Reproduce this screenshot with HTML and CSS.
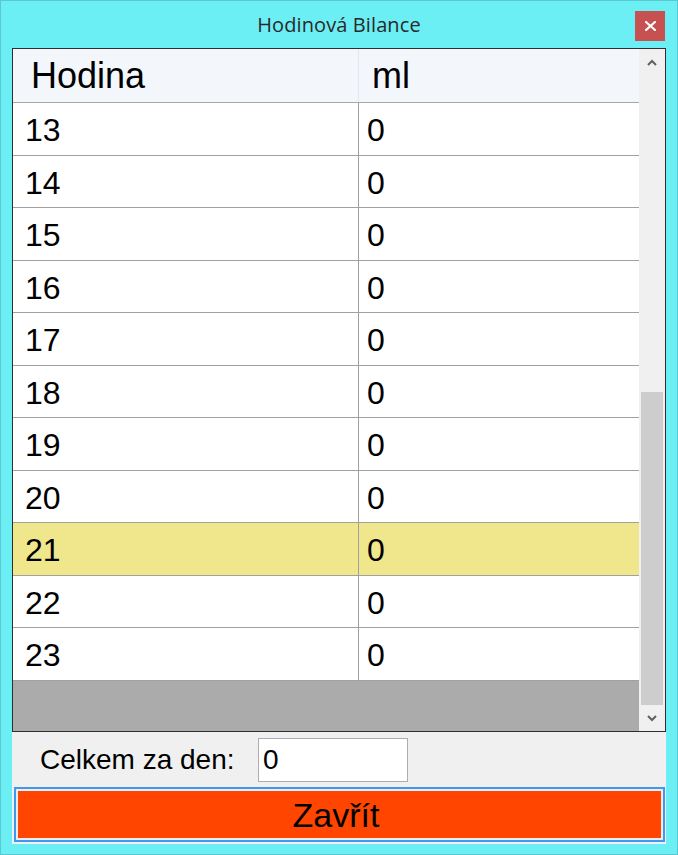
FILE: index.html
```html
<!DOCTYPE html>
<html lang="cs">
<head>
<meta charset="utf-8">
<title>Hodinová Bilance</title>
<link rel="stylesheet" href="styles.css">
</head>
<body>
<div class="window">
  <div class="titlebar">
    <span class="title">Hodinová Bilance</span>
    <div class="close" aria-label="Zavřít okno">
      <svg width="11" height="10" viewBox="0 0 11 10"><path d="M1 1 L10 9 M10 1 L1 9" stroke="#fff" stroke-width="2.2" stroke-linecap="square" fill="none"/></svg>
    </div>
  </div>
  <div class="client">
    <div class="grid">
      <div class="grid-body">
        <div class="row head">
          <div class="cell c1">Hodina</div>
          <div class="cell c2">ml</div>
        </div>
        <div class="row"><div class="cell c1">13</div><div class="cell c2">0</div></div>
        <div class="row"><div class="cell c1">14</div><div class="cell c2">0</div></div>
        <div class="row"><div class="cell c1">15</div><div class="cell c2">0</div></div>
        <div class="row"><div class="cell c1">16</div><div class="cell c2">0</div></div>
        <div class="row"><div class="cell c1">17</div><div class="cell c2">0</div></div>
        <div class="row"><div class="cell c1">18</div><div class="cell c2">0</div></div>
        <div class="row"><div class="cell c1">19</div><div class="cell c2">0</div></div>
        <div class="row"><div class="cell c1">20</div><div class="cell c2">0</div></div>
        <div class="row current"><div class="cell c1">21</div><div class="cell c2">0</div></div>
        <div class="row"><div class="cell c1">22</div><div class="cell c2">0</div></div>
        <div class="row"><div class="cell c1">23</div><div class="cell c2">0</div></div>
        <div class="empty"></div>
      </div>
      <div class="scrollbar">
        <div class="sb-btn">
          <svg width="10" height="7" viewBox="0 0 10 7"><path d="M1 6 L5 2 L9 6" stroke="#606060" stroke-width="2" fill="none"/></svg>
        </div>
        <div class="sb-track"><div class="sb-thumb"></div></div>
        <div class="sb-btn">
          <svg width="10" height="7" viewBox="0 0 10 7"><path d="M1 1 L5 5 L9 1" stroke="#606060" stroke-width="2" fill="none"/></svg>
        </div>
      </div>
    </div>
    <div class="total">
      <span class="label">Celkem za den:</span>
      <div class="textbox">0</div>
    </div>
    <div class="btn-row">
      <div class="btn"><span class="btn-face">Zavřít</span></div>
    </div>
  </div>
</div>
</body>
</html>
```
FILE: styles.css
```css
html, body {
  margin: 0;
  padding: 0;
}
body {
  width: 678px;
  height: 855px;
  overflow: hidden;
  background: #6beef4;
}
.window {
  box-sizing: border-box;
  width: 678px;
  height: 855px;
  border: 1px solid #58c9d0;
  background: #6beef4;
  display: flex;
  flex-direction: column;
}
.titlebar {
  height: 47px;
  flex: none;
  display: grid;
  grid-template-columns: 1fr auto 1fr;
  align-items: center;
}
.title {
  grid-column: 2;
  font-family: "Open Sans", "Noto Sans", sans-serif;
  font-size: 20px;
  color: #2a2a2a;
  line-height: 1;
  letter-spacing: 0.1px;
}
.close {
  grid-column: 3;
  justify-self: end;
  align-self: start;
  margin-top: 10px;
  margin-right: 12px;
  width: 30px;
  height: 30px;
  background: #c75050;
  display: flex;
  align-items: center;
  justify-content: center;
}
.client {
  margin: 0 11px;
  height: 796px;
  flex: none;
  background: #f0f0f0;
  display: flex;
  flex-direction: column;
}
.grid {
  box-sizing: border-box;
  height: 684px;
  flex: none;
  border: 1px solid #2e2e2e;
  display: flex;
  background: #ffffff;
}
.grid-body {
  flex: 1;
  display: flex;
  flex-direction: column;
  font-family: "Liberation Sans", Arial, sans-serif;
  color: #000;
}
.row {
  box-sizing: border-box;
  height: 52.5px;
  flex: none;
  display: grid;
  grid-template-columns: 346px 1fr;
  border-bottom: 1px solid #a0a0a0;
  background: #fff;
  font-size: 32px;
}
.row.head {
  height: 54px;
  background: #f3f6fb;
  font-size: 36px;
  border-bottom-color: #a8a8a8;
}
.row.current {
  background: #f0e68c;
}
.cell {
  display: flex;
  align-items: center;
  padding-left: 12px;
  padding-top: 3px;
  line-height: 1;
}
.c1 {
  border-right: 1px solid #a0a0a0;
}
.c2 {
  padding-left: 8px;
}
.head .cell {
  padding-top: 0;
}
.head .c1 {
  padding-left: 18px;
  border-right-color: #e2e7ee;
}
.head .c2 {
  padding-left: 13px;
}
.empty {
  flex: 1;
  background: #ababab;
}
.scrollbar {
  width: 26px;
  flex: none;
  display: flex;
  flex-direction: column;
  background: #f0f0f0;
}
.sb-btn {
  height: 26px;
  flex: none;
  display: flex;
  align-items: center;
  justify-content: center;
}
.sb-track {
  flex: 1;
  display: flex;
  flex-direction: column;
  justify-content: flex-end;
}
.sb-thumb {
  height: 313px;
  margin: 0 2px;
  background: #cdcdcd;
}
.total {
  height: 55px;
  flex: none;
  display: grid;
  grid-template-columns: 218px 150px;
  align-items: center;
  padding-left: 28px;
  font-family: "Liberation Sans", Arial, sans-serif;
  font-size: 28px;
  color: #000;
}
.label {
  line-height: 1;
}
.textbox {
  box-sizing: border-box;
  height: 44px;
  background: #fff;
  border: 1px solid #abadb3;
  padding-left: 4px;
  padding-top: 1px;
  display: flex;
  align-items: center;
  line-height: 1;
}
.btn-row {
  padding: 0 1px 0 2px;
}
.btn {
  box-sizing: border-box;
  height: 55px;
  border: 2px solid #3d9af0;
  padding: 2px;
  background: #e8eef4;
  display: flex;
}
.btn-face {
  flex: 1;
  background: #ff4500;
  display: flex;
  align-items: center;
  justify-content: center;
  padding-right: 7px;
  font-family: "Liberation Sans", Arial, sans-serif;
  font-size: 34px;
  color: #000;
  line-height: 1;
}
```
